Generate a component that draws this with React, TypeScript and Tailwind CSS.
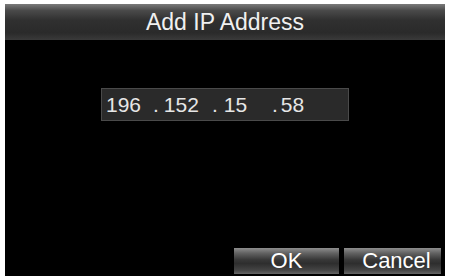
export default function App() {
  const font = { fontFamily: '"Liberation Sans", Arial, sans-serif' };
  return (
    <div className="w-[451px] h-[276px] bg-white pl-[5px] pr-[6px] pt-[4px] overflow-hidden" style={font}>
      <div className="w-full h-[272px] bg-black flex flex-col">
        <div className="h-[36px] flex items-center justify-center pt-[1px] bg-[linear-gradient(to_bottom,#7a7a7a_0%,#4a4a4a_18%,#303030_45%,#2a2a2a_80%,#3a3a3a_100%)] text-[#f0f0f0] text-[23px] leading-none">
          Add IP Address
        </div>
        <div className="flex-1 flex flex-col">
          <div className="mt-[48px] ml-[96px] w-[248px] h-[33px] border border-[#4a4a4a] bg-[#2a2a2a] flex items-center pl-[4px] text-[21px] leading-none text-[#e6e6e6]">
            <span className="w-[47px]">196</span>
            <span className="w-[59px] flex"><span>.</span><span className="ml-[5px]">152</span></span>
            <span className="w-[60px] flex"><span>.</span><span className="ml-[6px]">15</span></span>
            <span className="flex"><span>.</span><span className="ml-[3px]">58</span></span>
          </div>
          <div className="mt-auto mb-[2px] flex justify-end gap-[5px] pr-[4px]">
            <div className="w-[105px] h-[26px] flex items-center justify-center text-[22px] leading-none text-white bg-[linear-gradient(to_bottom,#8e8e8e_0%,#626262_20%,#383838_45%,#2e2e2e_60%,#444_85%,#666_100%)]">
              OK
            </div>
            <div className="w-[97px] h-[26px] flex items-center justify-center pl-[8px] text-[22px] leading-none text-white bg-[linear-gradient(to_bottom,#8e8e8e_0%,#626262_20%,#383838_45%,#2e2e2e_60%,#444_85%,#666_100%)]">
              Cancel
            </div>
          </div>
        </div>
      </div>
    </div>
  );
}
